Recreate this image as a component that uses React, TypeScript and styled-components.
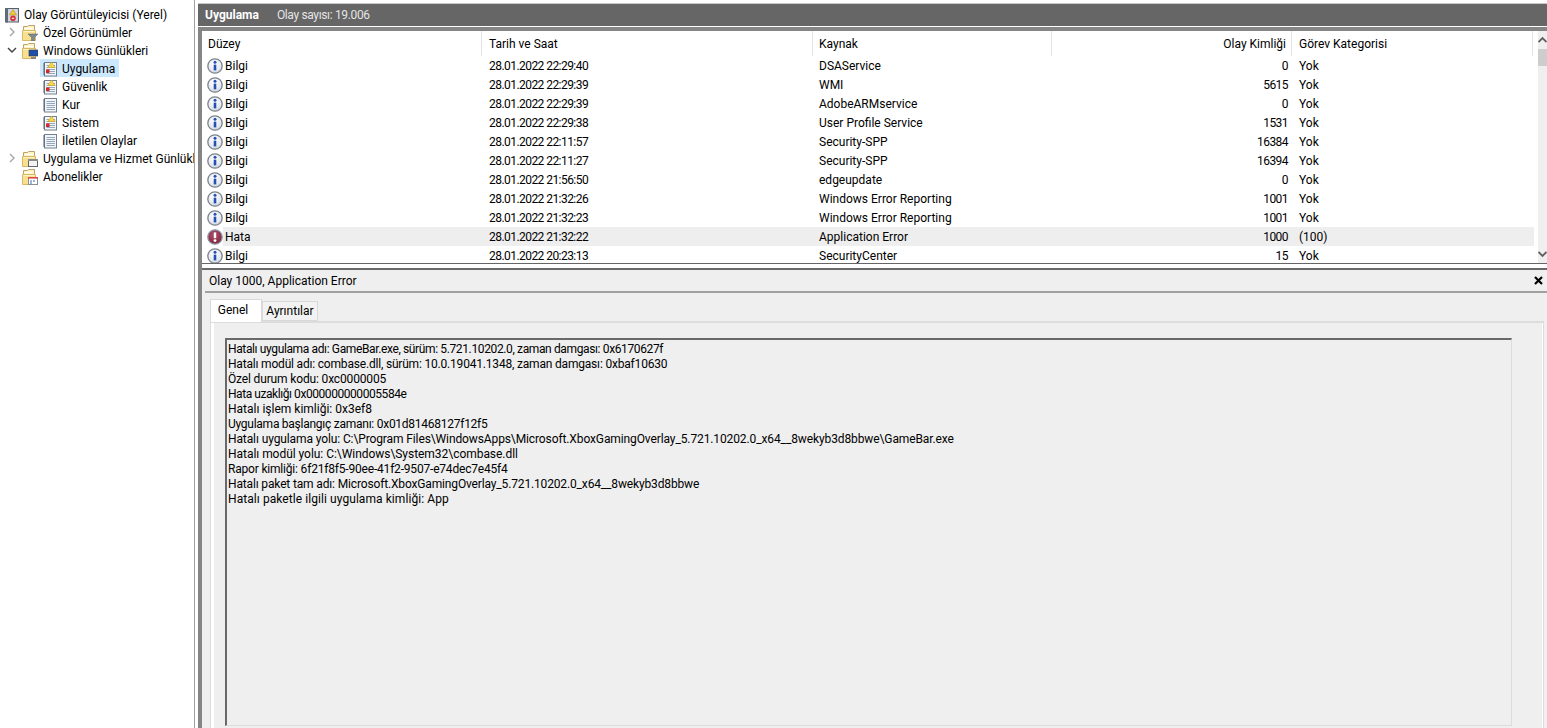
import React from "react";
import styled, { createGlobalStyle } from "styled-components";

const Global = createGlobalStyle`
  html, body { margin: 0; padding: 0; background: #fff; height: 100%; overflow: hidden; }
  body { font-family: Roboto, "Open Sans", sans-serif; font-size: 12px; color: #000; }
`;

const Page = styled.div`
  display: flex;
  width: 1547px;
  height: 728px;
  overflow: hidden;
`;

const Tree = styled.nav`
  width: 194px;
  flex: none;
  padding-top: 5px;
  border-right: 1px solid #a0a0a0;
  overflow: hidden;
`;

const TreeRow = styled.div<{ $indent: number }>`
  display: flex;
  align-items: center;
  height: 18px;
  padding-left: ${(p) => p.$indent}px;
  white-space: nowrap;
`;

const Chevron = styled.span`
  flex: none;
  width: 17px;
  height: 16px;
  display: flex;
  align-items: center;
  justify-content: center;
`;

const TreeItem = styled.span<{ $selected?: boolean; $gap?: number }>`
  display: flex;
  align-items: center;
  box-sizing: border-box;
  gap: ${(p) => p.$gap ?? 4}px;
  height: 18px;
  padding: 1px ${(p) => (p.$selected ? 4 : 2)}px 0 2px;
  background: ${(p) => (p.$selected ? "#cce8ff" : "transparent")};
`;

const Main = styled.main`
  flex: 1;
  min-width: 0;
  margin-left: 3px;
  display: flex;
  flex-direction: column;
`;

const TitleBar = styled.header`
  margin-top: 3px;
  height: 22px;
  flex: none;
  border-top: 1px solid #c8c8c8;
  background: #666;
  display: flex;
  align-items: center;
  padding-left: 7px;
  gap: 18px;
`;

const TitleStrong = styled.strong`
  color: #fff;
  font-weight: 700;
`;

const TitleMeta = styled.span`
  color: #e4e4e4;
  letter-spacing: -0.35px;
`;

const Frame = styled.div`
  margin-top: 1px;
  flex: 1;
  min-height: 0;
  display: flex;
  flex-direction: column;
  border-top: 4px solid #858585;
  border-left: 4px solid #858585;
  box-shadow: inset 1px 1px 0 #666;
`;

const ListPane = styled.section`
  height: 232px;
  flex: none;
  display: flex;
  background: #fff;
  border-bottom: 1px solid #666;
  overflow: hidden;
`;

const ListBody = styled.div`
  width: 1336px;
  flex: none;
`;

const HeaderGrid = styled.div`
  display: grid;
  grid-template-columns: 280px 331px 239px 240px 241px;
  height: 25px;
  width: 1331px;
`;

const HeaderCell = styled.div<{ $right?: boolean; $pad?: number }>`
  display: flex;
  align-items: center;
  padding: 0 5px 0 ${(p) => p.$pad ?? 6}px;
  justify-content: ${(p) => (p.$right ? "flex-end" : "flex-start")};
  border-right: 1px solid #e5e5e5;
`;

const EventRow = styled.div`
  display: flex;
  align-items: center;
  height: 19px;
  padding-left: 5px;
`;

const EventIcon = styled.span`
  flex: none;
  width: 16px;
  height: 16px;
  display: flex;
`;

const RowCells = styled.div<{ $selected?: boolean }>`
  display: grid;
  grid-template-columns: 259px 331px 239px 240px 242px;
  height: 19px;
  align-items: center;
  background: ${(p) => (p.$selected ? "#eeeeee" : "transparent")};
`;

const Cell = styled.span<{ $right?: boolean; $pad?: number; $numeric?: boolean }>`
  padding-left: ${(p) => p.$pad ?? 6}px;
  padding-right: ${(p) => (p.$right ? 4 : 0)}px;
  text-align: ${(p) => (p.$right ? "right" : "left")};
  letter-spacing: ${(p) => (p.$numeric ? "-0.55px" : "normal")};
  white-space: nowrap;
`;

const ScrollTrack = styled.div`
  flex: none;
  width: 9px;
  margin-left: auto;
  background: #efefef;
  display: flex;
  flex-direction: column;
`;

const ScrollButton = styled.div`
  height: 18px;
  flex: none;
  display: flex;
  align-items: center;
  overflow: hidden;
`;

const ScrollThumb = styled.div`
  height: 17px;
  flex: none;
  background: #cdcdcd;
`;

const ScrollSpace = styled.div`
  flex: 1;
`;

const Splitter = styled.div`
  height: 4px;
  flex: none;
  background: #fff;
`;

const DetailPane = styled.section`
  flex: 1;
  min-height: 0;
  background: #efefef;
  border-top: 2px solid #6a6a6a;
  display: flex;
  flex-direction: column;
`;

const DetailHeader = styled.div`
  height: 21px;
  flex: none;
  margin-left: 3px;
  padding: 0 3px 0 4px;
  border-bottom: 2px solid #a0a0a0;
  display: flex;
  align-items: center;
  justify-content: space-between;
`;

const CloseButton = styled.span`
  display: flex;
  width: 11px;
  height: 11px;
`;

const Tabs = styled.div`
  display: flex;
  align-items: flex-end;
  height: 22px;
  flex: none;
  margin: 6px 0 0 8px;
`;

const Tab = styled.div<{ $active?: boolean }>`
  display: flex;
  align-items: center;
  justify-content: center;
  box-sizing: border-box;
  width: ${(p) => (p.$active ? 52 : 56)}px;
  height: ${(p) => (p.$active ? 23 : 20)}px;
  margin-bottom: ${(p) => (p.$active ? -1 : 0)}px;
  padding: 0 ${(p) => (p.$active ? 6 : 0)}px ${(p) => (p.$active ? 2 : 0)}px 0;
  position: relative;
  z-index: ${(p) => (p.$active ? 1 : 0)};
  background: ${(p) => (p.$active ? "#fff" : "#f2f2f2")};
  border: 1px solid #d9d9d9;
  border-bottom: ${(p) => (p.$active ? "none" : "1px solid #d9d9d9")};
`;

const TabPanel = styled.div`
  flex: 1;
  min-height: 0;
  margin: 0 3px 0 8px;
  box-sizing: border-box;
  background: #efefef;
  border-top: 2px solid #dcdcdc;
  border-left: 1px solid #dcdcdc;
  border-right: 1px solid #dcdcdc;
  box-shadow: inset 3px 0 0 #fff, inset -1px 0 0 #fff;
  padding: 15px 31px 2px 14px;
  display: flex;
`;

const MessageBox = styled.div`
  flex: 1;
  box-sizing: border-box;
  padding: 2px 0 0 1px;
  border-top: 2px solid #696969;
  border-left: 2px solid #696969;
  border-right: 1px solid #dcdcdc;
  border-bottom: 1px solid #dcdcdc;
  line-height: 15px;
`;

const MessageLine = styled.div<{ $tracking: number }>`
  height: 15px;
  letter-spacing: ${(p) => p.$tracking}px;
  white-space: nowrap;
`;

const LogIcon = ({ alert = true }: { alert?: boolean }) => (
  <svg width="16" height="16" viewBox="0 0 16 16">
    <rect x="2.5" y="1.5" width="12" height="13.5" fill="#f2f5f9" stroke="#74808d" />
    <path d="M1 3H3M1 5H3M1 7H3M1 9H3M1 11H3M1 13H3" stroke="#55606c" />
    {[4, 6, 8, 10, 12].map((y) => (
      <path key={y} d={`M4.5 ${y + 0.5}H13`} stroke="#93a6ba" />
    ))}
    {alert && (
      <>
        <path d="M9.5 1L13.2 6.5H5.8Z" fill="#f7d64a" stroke="#c9a227" strokeWidth="0.6" />
        <rect x="4" y="8.5" width="3.5" height="3.5" fill="#d8262c" />
      </>
    )}
  </svg>
);

const RootIcon = () => (
  <svg width="16" height="16" viewBox="0 0 16 16">
    <rect x="2.5" y="1.5" width="12" height="13.5" fill="#cfd6df" stroke="#55606c" />
    <rect x="1" y="1" width="3" height="14.5" fill="#5f6b78" />
    <path d="M9 2.5L12.5 8H5.5Z" fill="#f3c93a" stroke="#b68f1b" strokeWidth="0.6" />
    <circle cx="9" cy="11.3" r="2.8" fill="#d6323a" />
    <path d="M7.8 11.3H10.2" stroke="#fff" />
  </svg>
);

const Folder = ({ children }: { children?: React.ReactNode }) => (
  <svg width="16" height="16" viewBox="0 0 16 16">
    <path d="M1.5 14.5V1.5H5.5L6.5 0.5H12.5V14.5Z" fill="#fff3c4" stroke="#b9a36a" />
    <path d="M3 3.5H11" stroke="#ffffff" />
    <path d="M0.5 15.5V5.5H13.5V15.5Z" fill="#f9e08f" stroke="#d9b866" />
    <path d="M1.5 6.5H12.5" stroke="#fff4c8" />
    {children}
  </svg>
);

const FilterFolder = () => (
  <Folder>
    <path d="M6 9H16L12.5 12.5V16H9.5V12.5Z" fill="#7d8a92" stroke="#586369" strokeWidth="0.5" />
  </Folder>
);
const ComputerFolder = () => (
  <Folder>
    <rect x="7" y="7" width="9" height="6" fill="#1f4fa8" stroke="#334" strokeWidth="0.6" />
    <path d="M9 15H14" stroke="#667" strokeWidth="1.4" />
  </Folder>
);
const WindowFolder = () => (
  <Folder>
    <rect x="6.5" y="8.5" width="9" height="7" fill="#f3f3f3" stroke="#666" />
    <rect x="6" y="8" width="10" height="2" fill="#8b8b8b" />
  </Folder>
);
const SubscriptionFolder = () => (
  <Folder>
    <rect x="6.5" y="8.5" width="9" height="7" fill="#fff" stroke="#8a8f96" />
    <rect x="6" y="8" width="10" height="1.6" fill="#d94a4a" />
    <path d="M8 12H10M11 12H13M8 14H10" stroke="#3a6ea5" />
  </Folder>
);

const InfoIcon = () => (
  <svg width="16" height="16" viewBox="0 0 16 16">
    <defs>
      <radialGradient id="infoFill" cx="45%" cy="35%" r="70%">
        <stop offset="0%" stopColor="#ffffff" />
        <stop offset="70%" stopColor="#e4e8ee" />
        <stop offset="100%" stopColor="#bcc3cc" />
      </radialGradient>
    </defs>
    <circle cx="8" cy="8" r="7.2" fill="url(#infoFill)" stroke="#7b838c" strokeWidth="1.3" />
    <circle cx="8" cy="4.2" r="1.5" fill="#2450b5" />
    <path d="M8 6.6V12.4" stroke="#2450b5" strokeWidth="2.6" />
  </svg>
);

const ErrorIcon = () => (
  <svg width="16" height="16" viewBox="0 0 16 16">
    <defs>
      <radialGradient id="errFill" cx="45%" cy="35%" r="70%">
        <stop offset="0%" stopColor="#b0506a" />
        <stop offset="100%" stopColor="#7e2338" />
      </radialGradient>
    </defs>
    <circle cx="8" cy="8" r="7.2" fill="url(#errFill)" stroke="#8796a8" strokeWidth="1.3" />
    <path d="M8 3.4V9.2" stroke="#fff" strokeWidth="2.4" />
    <circle cx="8" cy="11.6" r="1.4" fill="#fff" />
  </svg>
);

const ChevronRight = () => (
  <svg width="8" height="10" viewBox="0 0 8 10">
    <path d="M2 1L6 5L2 9" fill="none" stroke="#a6a6a6" strokeWidth="1.4" />
  </svg>
);

const ChevronDown = () => (
  <svg width="10" height="8" viewBox="0 0 10 8">
    <path d="M1 2L5 6L9 2" fill="none" stroke="#404040" strokeWidth="1.4" />
  </svg>
);

const ArrowGlyph = ({ up }: { up?: boolean }) => (
  <svg width="9" height="8" viewBox="0 0 9 8">
    <path d={up ? "M0.5 6L4.5 2L8.5 6" : "M0.5 2L4.5 6L8.5 2"} fill="none" stroke="#606060" strokeWidth="1.8" />
  </svg>
);

const CloseIcon = () => (
  <svg width="11" height="11" viewBox="0 0 11 11">
    <path d="M2 2L9 9M9 2L2 9" stroke="#000" strokeWidth="2.2" />
  </svg>
);

const events = [
  { level: "Bilgi", date: "28.01.2022 22:29:40", source: "DSAService", id: "0", task: "Yok" },
  { level: "Bilgi", date: "28.01.2022 22:29:39", source: "WMI", id: "5615", task: "Yok" },
  { level: "Bilgi", date: "28.01.2022 22:29:39", source: "AdobeARMservice", id: "0", task: "Yok" },
  { level: "Bilgi", date: "28.01.2022 22:29:38", source: "User Profile Service", id: "1531", task: "Yok" },
  { level: "Bilgi", date: "28.01.2022 22:11:57", source: "Security-SPP", id: "16384", task: "Yok" },
  { level: "Bilgi", date: "28.01.2022 22:11:27", source: "Security-SPP", id: "16394", task: "Yok" },
  { level: "Bilgi", date: "28.01.2022 21:56:50", source: "edgeupdate", id: "0", task: "Yok" },
  { level: "Bilgi", date: "28.01.2022 21:32:26", source: "Windows Error Reporting", id: "1001", task: "Yok" },
  { level: "Bilgi", date: "28.01.2022 21:32:23", source: "Windows Error Reporting", id: "1001", task: "Yok" },
  { level: "Hata", date: "28.01.2022 21:32:22", source: "Application Error", id: "1000", task: "(100)" },
  { level: "Bilgi", date: "28.01.2022 20:23:13", source: "SecurityCenter", id: "15", task: "Yok" },
];

const messages = [
  { text: "Hatalı uygulama adı: GameBar.exe, sürüm: 5.721.10202.0, zaman damgası: 0x6170627f", tracking: -0.37 },
  { text: "Hatalı modül adı: combase.dll, sürüm: 10.0.19041.1348, zaman damgası: 0xbaf10630", tracking: -0.19 },
  { text: "Özel durum kodu: 0xc0000005", tracking: -0.15 },
  { text: "Hata uzaklığı 0x000000000005584e", tracking: -0.44 },
  { text: "Hatalı işlem kimliği: 0x3ef8", tracking: 0 },
  { text: "Uygulama başlangıç zamanı: 0x01d81468127f12f5", tracking: -0.26 },
  { text: "Hatalı uygulama yolu: C:\\Program Files\\WindowsApps\\Microsoft.XboxGamingOverlay_5.721.10202.0_x64__8wekyb3d8bbwe\\GameBar.exe", tracking: -0.11 },
  { text: "Hatalı modül yolu: C:\\Windows\\System32\\combase.dll", tracking: -0.04 },
  { text: "Rapor kimliği: 6f21f8f5-90ee-41f2-9507-e74dec7e45f4", tracking: -0.19 },
  { text: "Hatalı paket tam adı: Microsoft.XboxGamingOverlay_5.721.10202.0_x64__8wekyb3d8bbwe", tracking: -0.15 },
  { text: "Hatalı paketle ilgili uygulama kimliği: App", tracking: 0.07 },
];

export default function App() {
  return (
    <Page>
      <Global />
      <Tree>
        <TreeRow $indent={2}>
          <TreeItem><RootIcon />Olay Görüntüleyicisi (Yerel)</TreeItem>
        </TreeRow>
        <TreeRow $indent={3}>
          <Chevron><ChevronRight /></Chevron>
          <TreeItem $gap={5}><FilterFolder />Özel Görünümler</TreeItem>
        </TreeRow>
        <TreeRow $indent={3}>
          <Chevron><ChevronDown /></Chevron>
          <TreeItem $gap={5}><ComputerFolder />Windows Günlükleri</TreeItem>
        </TreeRow>
        <TreeRow $indent={40}>
          <TreeItem $selected><LogIcon />Uygulama</TreeItem>
        </TreeRow>
        <TreeRow $indent={40}>
          <TreeItem><LogIcon />Güvenlik</TreeItem>
        </TreeRow>
        <TreeRow $indent={40}>
          <TreeItem><LogIcon alert={false} />Kur</TreeItem>
        </TreeRow>
        <TreeRow $indent={40}>
          <TreeItem><LogIcon />Sistem</TreeItem>
        </TreeRow>
        <TreeRow $indent={40}>
          <TreeItem><LogIcon alert={false} />İletilen Olaylar</TreeItem>
        </TreeRow>
        <TreeRow $indent={3}>
          <Chevron><ChevronRight /></Chevron>
          <TreeItem $gap={5}><WindowFolder />Uygulama ve Hizmet Günlükleri</TreeItem>
        </TreeRow>
        <TreeRow $indent={20}>
          <TreeItem $gap={5}><SubscriptionFolder />Abonelikler</TreeItem>
        </TreeRow>
      </Tree>
      <Main>
        <TitleBar>
          <TitleStrong>Uygulama</TitleStrong>
          <TitleMeta>Olay sayısı: 19.006</TitleMeta>
        </TitleBar>
        <Frame>
          <ListPane>
            <ListBody>
              <HeaderGrid>
                <HeaderCell>Düzey</HeaderCell>
                <HeaderCell $pad={7}>Tarih ve Saat</HeaderCell>
                <HeaderCell>Kaynak</HeaderCell>
                <HeaderCell $right>Olay Kimliği</HeaderCell>
                <HeaderCell $pad={7}>Görev Kategorisi</HeaderCell>
              </HeaderGrid>
              {events.map((e) => (
                <EventRow key={e.date + e.source}>
                  <EventIcon>{e.level === "Hata" ? <ErrorIcon /> : <InfoIcon />}</EventIcon>
                  <RowCells $selected={e.level === "Hata"}>
                    <Cell $pad={2}>{e.level}</Cell>
                    <Cell $pad={7} $numeric>{e.date}</Cell>
                    <Cell>{e.source}</Cell>
                    <Cell $right $numeric>{e.id}</Cell>
                    <Cell $pad={7}>{e.task}</Cell>
                  </RowCells>
                </EventRow>
              ))}
            </ListBody>
            <ScrollTrack>
              <ScrollButton><ArrowGlyph up /></ScrollButton>
              <ScrollThumb />
              <ScrollSpace />
              <ScrollButton><ArrowGlyph /></ScrollButton>
            </ScrollTrack>
          </ListPane>
          <Splitter />
          <DetailPane>
            <DetailHeader>
              <span>Olay 1000, Application Error</span>
              <CloseButton><CloseIcon /></CloseButton>
            </DetailHeader>
            <Tabs>
              <Tab $active>Genel</Tab>
              <Tab>Ayrıntılar</Tab>
            </Tabs>
            <TabPanel>
              <MessageBox>
                {messages.map((m) => (
                  <MessageLine key={m.text} $tracking={m.tracking}>{m.text}</MessageLine>
                ))}
              </MessageBox>
            </TabPanel>
          </DetailPane>
        </Frame>
      </Main>
    </Page>
  );
}
